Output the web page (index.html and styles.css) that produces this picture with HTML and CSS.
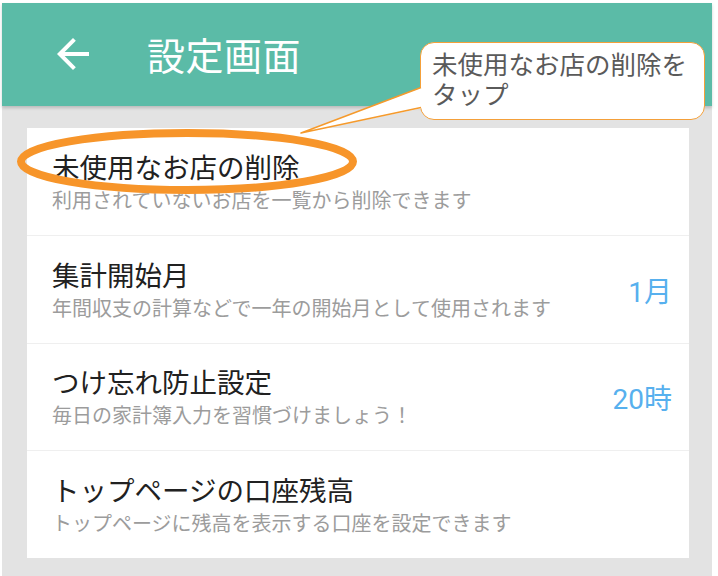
FILE: index.html
```html
<!DOCTYPE html>
<html lang="ja">
<head>
<meta charset="UTF-8" />
<meta name="viewport" content="width=device-width, initial-scale=1" />
<title>設定画面</title>
<link rel="stylesheet" href="styles.css">
</head>
<body>
  <div class="screen">

    <!-- ツールバー -->
    <div class="toolbar">
      <svg class="back" viewBox="0 0 24 24" width="48" height="48">
        <path d="M20 11H7.83l5.59-5.59L12 4l-8 8 8 8 1.41-1.41L7.83 13H20v-2z" fill="#fff"/>
      </svg>
      <h1>設定画面</h1>
    </div>

    <!-- 設定リスト -->
    <div class="content">
      <div class="card">
        <div class="row">
          <div class="texts">
            <p class="title">未使用なお店の削除</p>
            <p class="sub">利用されていないお店を一覧から削除できます</p>
          </div>
        </div>
        <div class="row">
          <div class="texts">
            <p class="title">集計開始月</p>
            <p class="sub">年間収支の計算などで一年の開始月として使用されます</p>
          </div>
          <span class="value">1月</span>
        </div>
        <div class="row">
          <div class="texts">
            <p class="title">つけ忘れ防止設定</p>
            <p class="sub">毎日の家計簿入力を習慣づけましょう！</p>
          </div>
          <span class="value">20時</span>
        </div>
        <div class="row">
          <div class="texts">
            <p class="title">トップページの口座残高</p>
            <p class="sub">トップページに残高を表示する口座を設定できます</p>
          </div>
        </div>
      </div>
    </div>
  </div>

  <!-- 注釈（吹き出しと丸囲み） -->
  <div class="callout">未使用なお店の削除を<br>タップ</div>
  <svg class="annot" width="718" height="576" viewBox="0 0 718 576">
    <polygon points="301,133 423,87 423,108" fill="#fff"/>
    <polyline points="421,87.5 301,133 421,107.5" fill="none" stroke="#f59a2c" stroke-width="1.6" stroke-linejoin="round"/>
    <ellipse cx="187" cy="161.5" rx="166" ry="28.5" fill="none" stroke="#f7952a" stroke-width="8"/>
  </svg>
</body>
</html>
```

FILE: styles.css
```css
/* リセット */
* {
  margin: 0; padding: 0; box-sizing: border-box;
}

body {
  background: #fff;
  font-family: Roboto, "Noto Sans CJK JP", sans-serif;
  width: 718px;
  height: 576px;
  overflow: hidden;
  position: relative;
}

.screen {
  margin: 3px 6px 0 2px;
  height: 573px;
  background: #e3e3e3;
  display: flex;
  flex-direction: column;
}

/* ツールバー */
.toolbar {
  height: 103px;
  background: #5bbba7;
  display: flex;
  align-items: center;
  padding-left: 47px;
  box-shadow: 0 2px 3px rgba(0, 0, 0, 0.18);
  position: relative;
  z-index: 1;
}

.back {
  display: block;
  margin-top: -2px;
}

.toolbar h1 {
  color: #fff;
  font-weight: 400;
  font-size: 38px;
  margin-left: 50px;
  margin-top: -2px;
  letter-spacing: 0.5px;
}

/* リスト */
.content {
  flex: 1;
  padding: 22px 23px 0 25px;
}

.card {
  background: #fff;
  height: 430px;
  display: flex;
  flex-direction: column;
}

.row {
  flex: 1;
  display: flex;
  align-items: center;
  padding: 5px 17px 0 25px;
  border-bottom: 1px solid #efefef;
}
.row:last-child {
  border-bottom: none;
}

.texts {
  flex: 1;
}

.title {
  font-size: 27.5px;
  line-height: 34px;
  color: #212121;
}

.sub {
  font-size: 20px;
  line-height: 30px;
  color: #9c9c9c;
}

.value {
  font-size: 28px;
  color: #57b0ee;
  margin-top: -4px;
}

/* 注釈 */
.callout {
  position: absolute;
  z-index: 2;
  left: 420px;
  top: 42px;
  width: 285px;
  height: 78px;
  background: #fff;
  border: 1.6px solid #f4a03a;
  border-radius: 14px;
  padding: 7px 0 0 11px;
  font-size: 25.5px;
  line-height: 30px;
  color: #5a5a5a;
}

.annot {
  position: absolute;
  z-index: 3;
  left: 0;
  top: 0;
  pointer-events: none;
}
```
